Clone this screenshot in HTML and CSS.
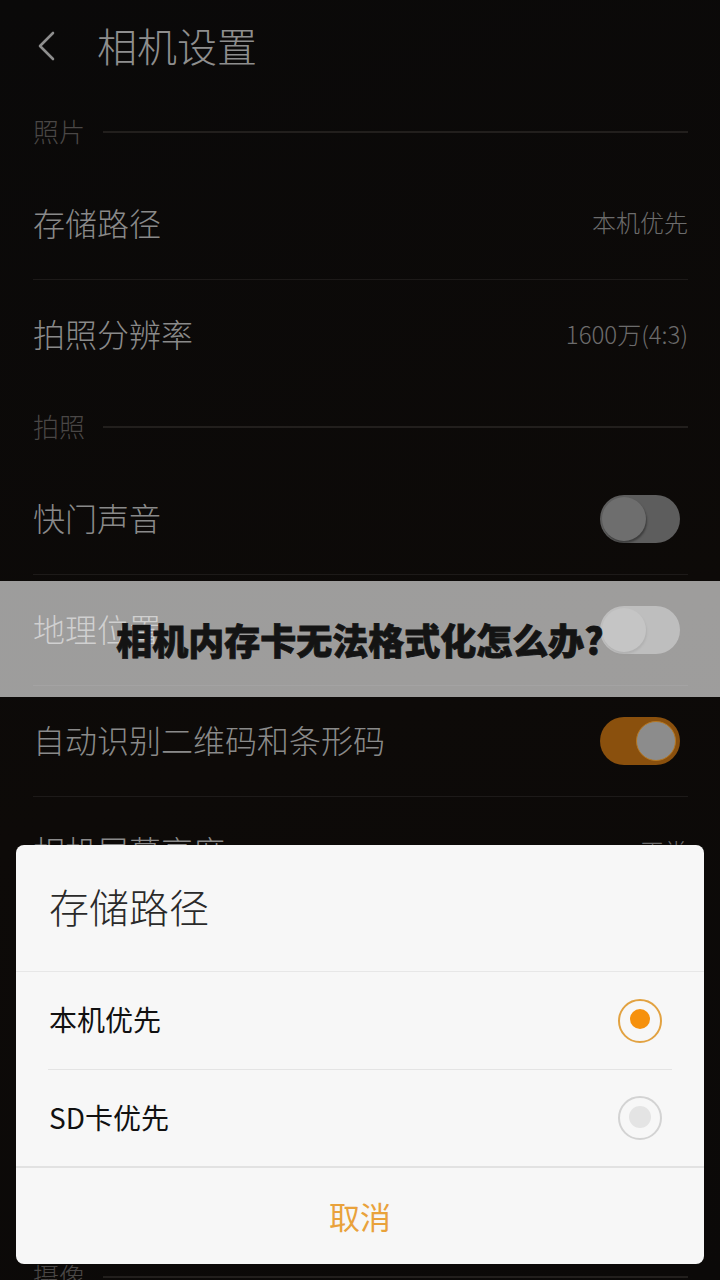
FILE: index.html
```html
<!DOCTYPE html>
<html lang="zh-CN">
<head>
    <meta charset="UTF-8">
    <meta name="viewport" content="width=device-width, initial-scale=1.0">
    <title>相机设置</title>
    <link rel="stylesheet" href="styles.css">
</head>
<body>
    <div class="screen">
        <div class="topbar">
            <svg class="back" width="22" height="30" viewBox="0 0 22 30">
                <polyline points="17,2 4,15 17,28" fill="none" stroke="#8e8e8e" stroke-width="2.6" stroke-linecap="round" stroke-linejoin="round"/>
            </svg>
            <div class="title">相机设置</div>
        </div>

        <div class="section"><span class="section-label">照片</span><span class="section-line"></span></div>
        <div class="row"><span class="label">存储路径</span><span class="value">本机优先</span></div>
        <div class="row"><span class="label">拍照分辨率</span><span class="value">1600万(4:3)</span></div>

        <div class="section"><span class="section-label">拍照</span><span class="section-line"></span></div>
        <div class="row"><span class="label">快门声音</span><span class="switch"><span class="thumb"></span></span></div>
        <div class="row"><span class="label">地理位置</span><span class="switch"><span class="thumb"></span></span></div>
        <div class="row"><span class="label">自动识别二维码和条形码</span><span class="switch on"><span class="thumb"></span></span></div>
        <div class="row"><span class="label">相机屏幕亮度</span><span class="value">正常</span></div>
        <div class="row"><span class="label">水平仪</span><span class="switch"><span class="thumb"></span></span></div>
        <div class="row"><span class="label">参考线</span><span class="switch"><span class="thumb"></span></span></div>
        <div class="row"><span class="label">音量键拍照</span><span class="switch"><span class="thumb"></span></span></div>

        <div class="section"><span class="section-label">摄像</span><span class="section-line"></span></div>

        <div class="banner">相机内存卡无法格式化怎么办?</div>

        <div class="dialog">
            <div class="dialog-title">存储路径</div>
            <div class="options">
                <div class="option"><span>本机优先</span><span class="radio checked"><span class="dot"></span></span></div>
                <div class="option"><span>SD卡优先</span><span class="radio"><span class="dot"></span></span></div>
            </div>
            <div class="cancel">取消</div>
        </div>
    </div>
</body>
</html>
```

FILE: styles.css
```css
body {
    margin: 0;
    background-color: #0b0908;
    font-family: "Noto Sans CJK SC", "Noto Sans", sans-serif;
}
.screen {
    position: relative;
    width: 720px;
    height: 1280px;
    overflow: hidden;
    background: linear-gradient(160deg, #0a0909 0%, #0d0a08 55%, #0b0908 100%);
}
.topbar {
    height: 95px;
    display: flex;
    align-items: center;
    padding-left: 36px;
}
.back {
    display: block;
    margin-top: -4px;
}
.title {
    margin-left: 39px;
    font-size: 40px;
    font-weight: 300;
    color: #8e8e8e;
    line-height: 1;
    margin-top: -6px;
}
.section {
    height: 73px;
    display: flex;
    align-items: center;
    gap: 18px;
    padding: 0 32px 0 33px;
}
.section-label {
    font-size: 26px;
    font-weight: 300;
    color: #4a4746;
    margin-top: -3px;
}
.section-line {
    flex: 1;
    height: 2px;
    background-color: #221f1d;
}
.row {
    height: 111px;
    box-sizing: border-box;
    display: flex;
    align-items: center;
    justify-content: space-between;
    margin: 0 32px 0 33px;
    padding-bottom: 4px;
}
.row + .row {
    border-top: 1px solid #1d1a19;
}
.label {
    font-size: 32px;
    font-weight: 300;
    color: #8a8a8a;
}
.value {
    font-size: 24px;
    font-weight: 300;
    color: #6c6c6c;
}
.switch {
    width: 80px;
    height: 48px;
    box-sizing: border-box;
    border-radius: 24px;
    padding: 2px;
    margin-right: 8px;
    margin-top: 4px;
    display: flex;
    align-items: center;
    background-color: #5d5d5d;
}
.switch .thumb {
    width: 44px;
    height: 44px;
    border-radius: 50%;
    background-color: #6e6e6e;
    box-shadow: 1px 2px 2px rgba(0, 0, 0, 0.35);
}
.switch.on {
    justify-content: flex-end;
    background-color: #8a500d;
    padding: 4px;
}
.switch.on .thumb {
    width: 38px;
    height: 38px;
    background-color: #8c8c8c;
    border: 1px solid #b57722;
    box-shadow: none;
}
.banner {
    position: absolute;
    left: 0;
    right: 0;
    top: 581px;
    height: 116px;
    display: flex;
    align-items: center;
    justify-content: center;
    background-color: rgba(255, 255, 255, 0.6);
    font-size: 36px;
    font-weight: 900;
    color: #141414;
    -webkit-text-stroke: 0.8px #141414;
}
.dialog {
    position: absolute;
    left: 16px;
    top: 845px;
    width: 688px;
    height: 419px;
    border-radius: 8px;
    background-color: #f7f7f7;
    display: flex;
    flex-direction: column;
}
.dialog-title {
    height: 127px;
    box-sizing: border-box;
    display: flex;
    align-items: center;
    padding: 0 0 4px 33px;
    font-size: 40px;
    font-weight: 300;
    color: #2a2a2a;
    border-bottom: 1px solid #e7e7e7;
}
.options {
    margin: 0 32px;
}
.option {
    height: 97px;
    box-sizing: border-box;
    display: flex;
    align-items: center;
    justify-content: space-between;
    padding: 0 10px 0 1px;
    font-size: 28px;
    color: #111;
}
.option span:first-child {
    margin-top: -3px;
}
.option + .option {
    border-top: 1px solid #e4e4e4;
}
.radio {
    width: 44px;
    height: 44px;
    box-sizing: border-box;
    border-radius: 50%;
    border: 2px solid #d3d3d3;
    display: flex;
    align-items: center;
    justify-content: center;
}
.radio .dot {
    width: 22px;
    height: 22px;
    border-radius: 50%;
    background-color: #e4e4e4;
}
.radio.checked {
    border-color: #e2a241;
}
.radio.checked .dot {
    width: 20px;
    height: 20px;
    background-color: #f6910d;
}
.cancel {
    flex: 1;
    display: flex;
    align-items: center;
    justify-content: center;
    border-top: 2px solid #e2e2e2;
    font-size: 31px;
    color: #e9a23b;
    padding-bottom: 2px;
}
```
